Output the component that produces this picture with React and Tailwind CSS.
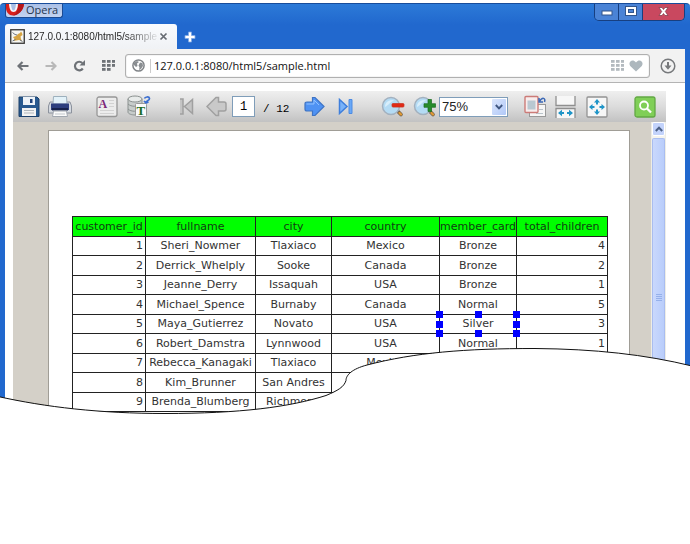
import React from "react";

const columns = ["customer_id", "fullname", "city", "country", "member_card", "total_children"];

const rows = [
  [1, "Sheri_Nowmer", "Tlaxiaco", "Mexico", "Bronze", 4],
  [2, "Derrick_Whelply", "Sooke", "Canada", "Bronze", 2],
  [3, "Jeanne_Derry", "Issaquah", "USA", "Bronze", 1],
  [4, "Michael_Spence", "Burnaby", "Canada", "Normal", 5],
  [5, "Maya_Gutierrez", "Novato", "USA", "Silver", 3],
  [6, "Robert_Damstra", "Lynnwood", "USA", "Normal", 1],
  [7, "Rebecca_Kanagaki", "Tlaxiaco", "Mexico", "Bronze", 2],
  [8, "Kim_Brunner", "San Andres", "Mexico", "Bronze", 2],
  [9, "Brenda_Blumberg", "Richmond", "Canada", "Normal", 5],
];

const handles = [
  "-left-1 -top-1",
  "left-1/2 -ml-[3px] -top-1",
  "-right-1 -top-1",
  "-left-1 top-1/2 -mt-[3px]",
  "-right-1 top-1/2 -mt-[3px]",
  "-left-1 -bottom-1",
  "left-1/2 -ml-[3px] -bottom-1",
  "-right-1 -bottom-1",
];

function IconButton({ label, className, children }) {
  return (
    <button type="button" aria-label={label} className={"flex shrink-0 items-center justify-center " + (className || "")}>
      {children}
    </button>
  );
}

function GridIcon({ short, className }) {
  return (
    <svg width="13" height="11" viewBox="0 0 13 11" className={className} fill="currentColor" aria-hidden="true">
      {[0, 4, 8].map((y) =>
        [0, 5, 10].map((x) =>
          short && y === 8 && x === 10 ? null : <rect key={x + "-" + y} x={x} y={y} width="3.6" height="2.8" />
        )
      )}
    </svg>
  );
}

function TitleBar() {
  return (
    <div className="flex h-[21px] items-start justify-between">
      <button type="button" className="flex h-[15px] items-start gap-[2px] rounded-b-[3px] border border-t-0 border-[#1b4a93] bg-gradient-to-b from-[#a9bfe6] to-[#c3d3f0] pr-1 text-[11px] leading-[14px] text-[#26364f]">
        <svg width="18" height="14" viewBox="0 0 18 14" aria-hidden="true">
          <path d="M0 0H18C18 7 13 12 7 12.500C3 12.500 0 9 0 5Z" fill="#d9201c" />
          <path d="M12 0H18C18 7 13 12 7 12.500C12 10 12.500 5 12 0Z" fill="#b5171a" />
          <path d="M3 0H12C12 5 10.500 9 7.500 9C4.500 9 3 5 3 0Z" fill="#f4f7fc" />
          <path d="M5 0H10C10 4 9 7.500 7.500 7.500C6 7.500 5 4 5 0Z" fill="#a9bfe6" />
        </svg>
        <span>Opera</span>
      </button>
      <div className="flex h-[18px] overflow-hidden rounded-b-[5px] border border-t-0 border-[#173f80]">
        <IconButton label="Minimize" className="w-6 border-r border-[#173f80] bg-[#4a83d6]">
          <svg width="12" height="12" viewBox="0 0 12 12"><rect x="1" y="5" width="10" height="4" fill="#fff" stroke="#31558c" /></svg>
        </IconButton>
        <IconButton label="Maximize" className="w-6 border-r border-[#173f80] bg-[#4a83d6]">
          <svg width="12" height="12" viewBox="0 0 12 12"><rect x=".5" y=".5" width="11" height="9" fill="#fff" stroke="#31558c" /><rect x="3.500" y="3.500" width="5" height="3" fill="#4a83d6" stroke="#31558c" /></svg>
        </IconButton>
        <IconButton label="Close" className="w-[41px] bg-[#c9485f]">
          <svg width="11" height="11" viewBox="0 0 11 11"><path d="M1 1.500H4L5.500 3.500L7 1.500H10L7.300 5.500L10 9.500H7L5.500 7.500L4 9.500H1L3.700 5.500Z" fill="#fff" stroke="#7c3344" strokeWidth=".7" /></svg>
        </IconButton>
      </div>
    </div>
  );
}

function TabStrip() {
  return (
    <div className="flex h-[25px] items-stretch">
      <div className="flex w-[172px] items-center rounded-t-[3px] bg-gradient-to-b from-[#f9fbfe] to-[#f0f2f5] pl-[5px]">
        <svg width="15" height="15" viewBox="0 0 15 15" className="shrink-0" aria-hidden="true">
          <rect x=".75" y=".75" width="13.500" height="13.500" fill="#f6f6f2" stroke="#333" strokeWidth="1.300" />
          <path d="M3 8L6 7L8 5L10 4L11 2.500L12 4L12.500 6L10.500 7.500L11 10L12 12L9 11L6 11.500L3 12L4.500 10Z" fill="#d6a443" />
          <path d="M2.500 3.500L5 5.500L7 6M2.500 12L5.500 10.500M10 11L12.500 12.500" stroke="#6c7480" fill="none" />
        </svg>
        <span className="ml-[3px] whitespace-nowrap bg-gradient-to-r from-[#222] from-75% to-[#22222218] bg-clip-text font-['Liberation_Sans',Arial,sans-serif] text-[10px] text-transparent">
          127.0.0.1:8080/html5/sample
        </span>
        <IconButton label="Close tab" className="ml-auto mr-[9px]">
          <svg width="9" height="9" viewBox="0 0 9 9"><path d="M1.500 1.500L7.500 7.500M7.500 1.500L1.500 7.500" stroke="#666b72" strokeWidth="1.700" /></svg>
        </IconButton>
      </div>
      <IconButton label="New tab" className="ml-[7px]">
        <svg width="12" height="12" viewBox="0 0 12 12"><path d="M4.500 1H7.500V4.500H11V7.500H7.500V11H4.500V7.500H1V4.500H4.500Z" fill="#fff" stroke="#7da7e4" strokeWidth=".8" /></svg>
      </IconButton>
    </div>
  );
}

function AddressBar() {
  return (
    <div className="flex h-[34px] items-center border-b border-[#b4b4b4] bg-[#f2f2f2] pl-3 pr-[9px]">
      <IconButton label="Back">
        <svg width="12" height="10" viewBox="0 0 12 10"><path d="M11.500 5H2M5.500 1L1.500 5L5.500 9" fill="none" stroke="#6e7277" strokeWidth="2.200" /></svg>
      </IconButton>
      <IconButton label="Forward" className="ml-4">
        <svg width="12" height="10" viewBox="0 0 12 10"><path d="M.5 5H10M6.500 1L10.500 5L6.500 9" fill="none" stroke="#b8b8b8" strokeWidth="2.200" /></svg>
      </IconButton>
      <IconButton label="Reload" className="ml-4">
        <svg width="13" height="12" viewBox="0 0 13 12"><path d="M9.800 8.500A4.300 4.300 0 1 1 9.300 3" fill="none" stroke="#6e7277" strokeWidth="2.200" /><path d="M12 0V5.500H6.500Z" fill="#6e7277" /></svg>
      </IconButton>
      <IconButton label="Speed dial" className="ml-4"><GridIcon short className="text-[#6e7277]" /></IconButton>
      <div className="ml-[10px] flex h-6 min-w-0 flex-1 items-center rounded-[3px] border border-[#b0b0b0] bg-white pl-[6px] pr-[6px] shadow-[inset_0_0_1px_#999]">
        <svg width="13" height="13" viewBox="0 0 13 13" className="shrink-0" aria-hidden="true">
          <circle cx="6.500" cy="6.500" r="5.600" fill="#fff" stroke="#808488" strokeWidth="1.500" />
          <path d="M2 3.500L5 2L7 3L5 4.500L5.500 7L4 8L2 6ZM8 3.500L10.500 4L11 7L9 10L7 11L7.500 8.500L6.500 6.500Z" fill="#8a8e92" />
        </svg>
        <span className="ml-[5px] h-[14px] w-px bg-[#ccc]" />
        <input aria-label="Address" defaultValue="127.0.0.1:8080/html5/sample.html" className="ml-[3px] min-w-0 flex-1 bg-transparent text-[11px] leading-4 text-[#111] outline-none" />
        <IconButton label="Show in speed dial"><GridIcon className="text-[#b3babf]" /></IconButton>
        <IconButton label="Bookmark" className="ml-[5px]">
          <svg width="14" height="12" viewBox="0 0 14 12"><path d="M7 11.500L1.200 6C-1 3 2-.8 5.300.9Q6.500 1.500 7 2.500Q7.500 1.500 8.700.9C12-.8 15 3 12.800 6Z" fill="#adb7bd" /></svg>
        </IconButton>
      </div>
      <IconButton label="Downloads" className="ml-[10px]">
        <svg width="16" height="16" viewBox="0 0 16 16"><circle cx="8" cy="8" r="6.800" fill="none" stroke="#77797c" strokeWidth="1.500" /><path d="M7 4H9V7.500H11.500L8 11.800L4.500 7.500H7Z" fill="#77797c" /></svg>
      </IconButton>
    </div>
  );
}

function Magnifier({ children }) {
  return (
    <svg width="24" height="22" viewBox="0 0 24 22" aria-hidden="true">
      <path d="M17 15.500L20 18.500" stroke="#6b5a46" strokeWidth="3.600" strokeLinecap="round" />
      <path d="M18.500 17L20 18.500" stroke="#e09a35" strokeWidth="2.400" strokeLinecap="round" />
      <circle cx="10" cy="10" r="8.500" fill="#b4dbf4" stroke="#a3b1bf" strokeWidth="1.500" />
      <path d="M4 11C4 6 8 3.500 13 4.500C9 6 8 9 4 11Z" fill="#d8eefb" />
      {children}
    </svg>
  );
}

function ViewerToolbar() {
  return (
    <div className="flex h-[31px] items-center bg-gradient-to-b from-[#efefef] via-[#dcdcdc] to-[#c2c2c2] pl-[5px]">
      <IconButton label="Save">
        <svg width="22" height="22" viewBox="0 0 22 22">
          <path d="M1 1H19L21 3V20.500H1Z" fill="#28598f" stroke="#1d416b" />
          <path d="M5 1H17V9H5Z" fill="#eef3f8" /><path d="M12 3H14.500V7H12Z" fill="#20447c" />
          <path d="M4 12H18V20H4Z" fill="#f3f3f3" /><path d="M6 14.500H16M6 17H16" stroke="#b1b7bd" />
        </svg>
      </IconButton>
      <IconButton label="Print" className="ml-2">
        <svg width="24" height="22" viewBox="0 0 24 22">
          <path d="M2 6H22L23.500 10V17H.5V10Z" fill="#d4d9e0" stroke="#8c929d" />
          <path d="M5.500 .5H18.500L19 8H5Z" fill="#e3f2f9" stroke="#9db0bd" />
          <path d="M3 7.500H21V14H3Z" fill="#2c3e7e" />
          <path d="M4 12H20V14.500H4Z" fill="#17224c" />
          <path d="M5.500 15H18.500L19.500 20.500H4.500Z" fill="#fafafa" stroke="#a2a8b0" /><path d="M7 18H17" stroke="#c3c8cc" />
        </svg>
      </IconButton>
      <IconButton label="Text" className="ml-6">
        <svg width="22" height="22" viewBox="0 0 22 22">
          <rect x="1" y="1" width="20" height="19.500" rx="2" fill="#ececec" stroke="#979797" strokeWidth="1.300" />
          <path d="M13 4.500H18M13 7.500H18M13 10.500H18M4 14.500H18M4 17.500H18" stroke="#d2d2d2" />
          <text x="2.500" y="12" fontFamily="Liberation Serif, serif" fontWeight="bold" fontSize="12" fill="#7b2779">A</text>
        </svg>
      </IconButton>
      <IconButton label="Query data" className="ml-[9px]">
        <svg width="24" height="23" viewBox="0 0 24 23">
          <path d="M1 4V17C1 19 5 20 8 20L15 18V4Z" fill="#c7cccb" stroke="#8b9190" />
          <ellipse cx="8" cy="4" rx="7" ry="3" fill="#e8ebea" stroke="#8b9190" />
          <path d="M1 9C4 12 11 12 15 9M1 14C4 17 11 17 15 14" fill="none" stroke="#8b9190" />
          <rect x="8.500" y="8.500" width="11" height="13" rx="1" fill="#fafafa" stroke="#9a9a9a" />
          <text x="9.500" y="19.500" fontFamily="Liberation Serif, serif" fontWeight="bold" fontSize="13" fill="#1a6b25">T</text>
          <path d="M17.500 3.500C18 2 22 1 22.500 3.500C22.500 6 19.500 5 19 8M17 6L19 8L21.500 7" fill="none" stroke="#3c6fd0" strokeWidth="1.700" />
        </svg>
      </IconButton>
      <IconButton label="First page" className="ml-7">
        <svg width="15" height="17" viewBox="0 0 15 17"><path d="M1 1H4V16H1M13.500 1.500V15.500L5.500 8.500Z" fill="#c4c4c4" stroke="#a0a0a0" strokeWidth="1.500" /></svg>
      </IconButton>
      <IconButton label="Previous page" className="ml-3">
        <svg width="21" height="21" viewBox="0 0 21 21"><path d="M1 10.500L10 1.500H12.500V6H18Q20 6 20 8V13Q20 15 18 15H12.500V19.500H10Z" fill="#c9c9c9" stroke="#a0a0a0" strokeWidth="1.500" /></svg>
      </IconButton>
      <input aria-label="Page" defaultValue="1" className="ml-[5px] h-[21px] w-[23px] shrink-0 border border-[#7f9db9] bg-white text-center font-['Liberation_Mono',monospace] text-[12px] text-black outline-none" />
      <span className="ml-2 w-[41px] shrink-0 whitespace-pre pt-1 font-['Liberation_Mono',monospace] text-[11px] leading-4 text-black">/ 12</span>
      <IconButton label="Next page">
        <svg width="21" height="21" viewBox="0 0 21 21"><path d="M20 10.500L11 1.500H8.500V6H3Q1 6 1 8V13Q1 15 3 15H8.500V19.500H11Z" fill="#4f92f3" stroke="#3f74c4" strokeWidth="1.200" /><path d="M2.500 8H10V4L15 9" fill="none" stroke="#92c2ff" /></svg>
      </IconButton>
      <IconButton label="Last page" className="ml-[13px]">
        <svg width="15" height="17" viewBox="0 0 15 17"><path d="M1.500 1.500V15.500L9 8.500Z" fill="#79b3fa" stroke="#3f7fdc" strokeWidth="1.500" /><path d="M11 1.500H14V15.500H11Z" fill="#69a8f7" stroke="#4c8be3" /></svg>
      </IconButton>
      <IconButton label="Zoom out" className="ml-7">
        <Magnifier><rect x="11" y="7.500" width="12" height="3.600" rx="1" fill="#e02a15" stroke="#c9301f" strokeWidth=".7" /></Magnifier>
      </IconButton>
      <IconButton label="Zoom in" className="ml-2">
        <Magnifier><path d="M15 3.500H18.500V7.700H22.500V11.300H18.500V15.500H15V11.300H11V7.700H15Z" fill="#278c2b" stroke="#1b6c1e" strokeWidth=".7" /></Magnifier>
      </IconButton>
      <div className="relative ml-[2px] h-5 w-[69px] shrink-0">
        <select aria-label="Zoom" defaultValue="75%" className="block h-full w-full appearance-none border border-[#7f9db9] bg-white pl-[2px] font-['Liberation_Sans',Arial,sans-serif] text-[13px] leading-4 text-[#222] outline-none">
          <option>50%</option>
          <option>75%</option>
          <option>100%</option>
        </select>
        <span className="pointer-events-none absolute right-[2px] top-[2px] flex h-4 w-[14px] items-center justify-center rounded-[1px] bg-gradient-to-br from-[#dbe6fd] to-[#b1c8f7]">
          <svg width="8" height="6" viewBox="0 0 8 6"><path d="M.8 1L4 4.300L7.200 1" fill="none" stroke="#3f5680" strokeWidth="1.900" /></svg>
        </span>
      </div>
      <IconButton label="Fit page" className="ml-4">
        <svg width="23" height="23" viewBox="0 0 23 23">
          <rect x="5.500" y="9.500" width="16" height="12" fill="#f6f6f6" stroke="#999" /><path d="M15 14.500H19M12 18.500H19" stroke="#b9c3ca" />
          <rect x="1" y="1.500" width="13" height="16" rx="1" fill="#f8eded" stroke="#cc7b78" strokeWidth="1.400" />
          <rect x="3.500" y="5.500" width="8" height="9" fill="#b9c8d1" />
          <path d="M15 3V7H19M15.500 6.500C18 2 22 2.500 20.500 7" fill="none" stroke="#3c68b5" strokeWidth="1.500" />
        </svg>
      </IconButton>
      <IconButton label="Fit width" className="ml-2">
        <svg width="21" height="22" viewBox="0 0 21 22">
          <path d="M1 0V9.500H20V0M1 22V12.500H20V22" fill="#f7f7f7" stroke="#8f8f8f" strokeWidth="1.300" />
          <path d="M3 17L7 13.800V16H9V18H7V20.200ZM18 17L14 13.800V16H12V18H14V20.200Z" fill="#1f95c8" />
        </svg>
      </IconButton>
      <IconButton label="Full screen" className="ml-[10px]">
        <svg width="22" height="22" viewBox="0 0 22 22">
          <rect x="1" y="1" width="20" height="20" rx="1" fill="#f7f7f7" stroke="#939393" strokeWidth="1.300" />
          <path d="M11 3L14 6.500H12V8.500H10V6.500H8ZM11 19L14 15.500H12V13.500H10V15.500H8ZM3 11L6.500 8V10H8.500V12H6.500V14ZM19 11L15.500 8V10H13.500V12H15.500V14Z" fill="#1f95c8" />
        </svg>
      </IconButton>
      <IconButton label="Search" className="ml-[26px]">
        <svg width="22" height="22" viewBox="0 0 22 22">
          <rect x="1" y="1" width="20" height="20" rx="2" fill="#80cf57" stroke="#62a844" strokeWidth="1.300" />
          <circle cx="10" cy="9.500" r="4" fill="none" stroke="#fff" strokeWidth="1.800" /><path d="M13 12.500L17 16.500" stroke="#fff" strokeWidth="2.300" />
        </svg>
      </IconButton>
    </div>
  );
}

function ReportTable() {
  return (
    <table className="w-full table-fixed border-collapse font-['DejaVu_Sans',Verdana,sans-serif] text-[11px] leading-4 text-[#333]">
      <colgroup>
        <col className="w-[73px]" />
        <col className="w-[110px]" />
        <col className="w-[76px]" />
        <col className="w-[108px]" />
        <col className="w-[77px]" />
        <col className="w-[91px]" />
      </colgroup>
      <thead>
        <tr className="h-5 bg-[#00ff00] text-[#124012]">
          {columns.map((name) => (
            <th key={name} scope="col" className="border border-[#222] p-0 text-center font-normal">
              <span className="-mx-1 whitespace-nowrap">{name}</span>
            </th>
          ))}
        </tr>
      </thead>
      <tbody>
        {rows.map((row) => (
          <tr key={row[0]} className="odd:h-[19px] even:h-5">
            {row.map((value, i) => {
              const selected = value === "Silver";
              return (
                <td key={i} className={"border border-[#222] py-0 whitespace-nowrap " + (i === 0 || i === 5 ? "pl-0 pr-[2px] text-right" : "px-0 text-center") + (selected ? " relative" : "")}>
                  {value}
                  {selected && handles.map((place) => <span key={place} className={"absolute size-[7px] bg-[#0000ff] " + place} />)}
                </td>
              );
            })}
          </tr>
        ))}
      </tbody>
    </table>
  );
}

function ScrollBar() {
  return (
    <div className="flex w-[15px] flex-col border-x border-[#eeede5] bg-[#f5f4ee]">
      <IconButton label="Scroll up" className="h-[14px] rounded-[2px] border border-white bg-[#c3d3fb]">
        <svg width="8" height="6" viewBox="0 0 8 6"><path d="M.8 5L4 1.700L7.200 5" fill="none" stroke="#4d6185" strokeWidth="2" /></svg>
      </IconButton>
      <div className="mt-[2px] flex flex-1 items-center justify-center rounded-t-[2px] border-x border-t border-[#a9bdf0] bg-gradient-to-r from-[#c9d8fd] to-[#b9cdfb]">
        <svg width="6" height="7" viewBox="0 0 6 7" className="mt-10"><path d="M0 .5H6M0 2.500H6M0 4.500H6M0 6.500H6" stroke="#95b0ea" /></svg>
      </div>
    </div>
  );
}

export default function App() {
  return (
    <div className="min-h-screen bg-white pt-[3px] font-['Open_Sans','Noto_Sans',sans-serif]">
      <div className="relative overflow-hidden rounded-t-[4px] border-t border-[#174c9b] bg-gradient-to-b from-[#2c7ad8] from-0% via-[#2168ce] via-5% to-[#2168ce] px-[5px]">
        <header className="-mt-px">
          <TitleBar />
          <TabStrip />
          <AddressBar />
        </header>
        <main className="bg-white pl-2 pr-[19px] pt-2">
          <ViewerToolbar />
          <div className="flex bg-[#d4d0c8]">
            <div className="min-w-0 flex-1 pl-[35px] pr-[21px] pt-2">
              <div className="border border-b-0 border-[#a09d96] bg-white pb-[3px] pl-[23px] pr-[22px] pt-[85px]">
                <ReportTable />
              </div>
            </div>
            <ScrollBar />
          </div>
        </main>
        <svg className="pointer-events-none absolute inset-x-0 bottom-0 h-[70px] w-full" viewBox="0 0 690 70" preserveAspectRatio="none" aria-hidden="true">
          <path d="M-2 51.500C45 62 100 68.500 165 68.500C240 68.500 290 62 326 50.500C338 45.500 344 42 346 35.500C346 30 352 24 367 20C415 7.500 465 3.500 535 3.500C595 4 645 9.500 692 21V72H-2Z" fill="#fff" stroke="#111" strokeWidth="1" />
        </svg>
      </div>
    </div>
  );
}
